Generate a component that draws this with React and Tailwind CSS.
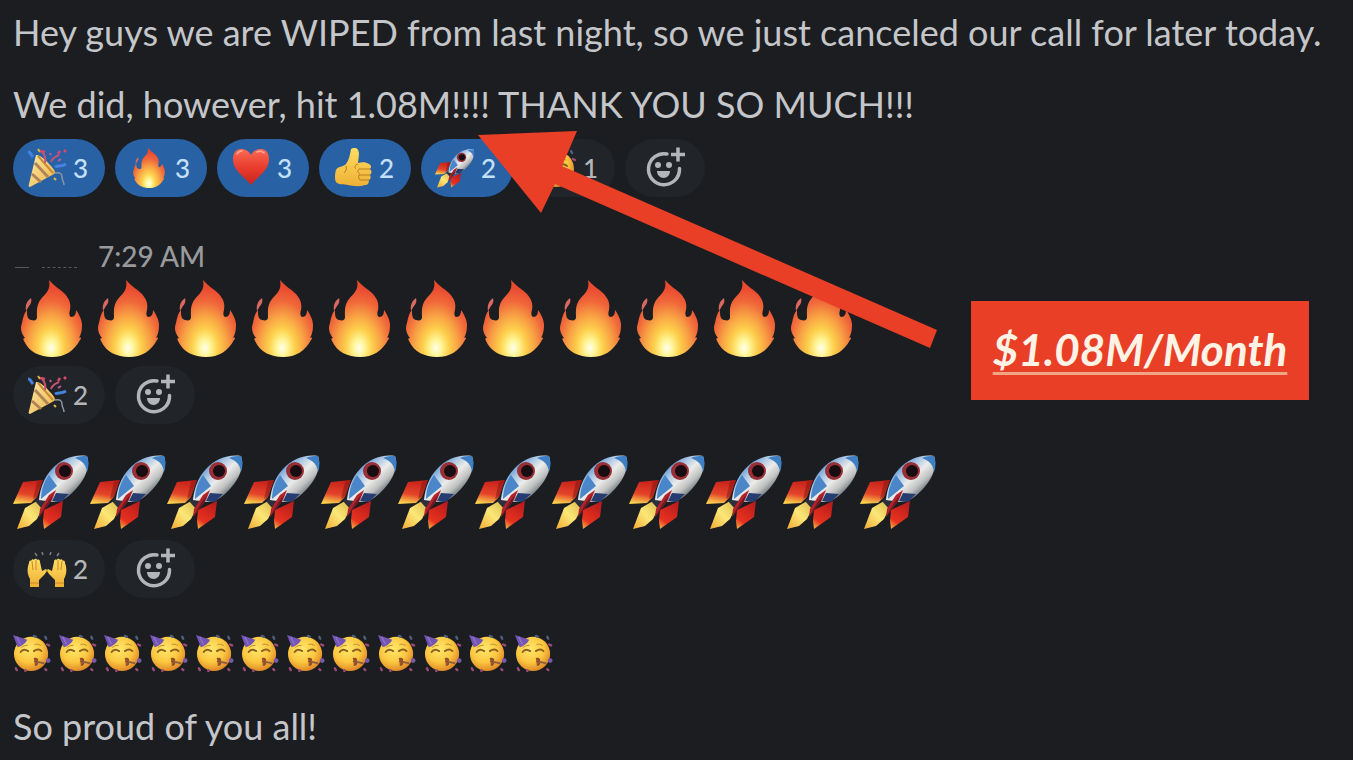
import React from "react";

const Gradients = () => (
  <svg className="absolute h-0 w-0" aria-hidden="true">
    <defs>
      <radialGradient id="flame" gradientUnits="userSpaceOnUse" cx="38" cy="68" r="60" gradientTransform="translate(38 0) scale(0.68 1) translate(-38 0)">
        <stop offset="0" stopColor="#fffef0" />
        <stop offset="0.14" stopColor="#fff596" />
        <stop offset="0.32" stopColor="#fdd04c" />
        <stop offset="0.55" stopColor="#f8a044" />
        <stop offset="0.78" stopColor="#f0683a" />
        <stop offset="1" stopColor="#ea4a30" />
      </radialGradient>
      <linearGradient id="hull" gradientUnits="userSpaceOnUse" x1="36" y1="14" x2="62" y2="42">
        <stop offset="0" stopColor="#5b93d2" />
        <stop offset="0.25" stopColor="#a9c6e4" />
        <stop offset="0.5" stopColor="#ececea" />
        <stop offset="0.75" stopColor="#bfc1c0" />
        <stop offset="1" stopColor="#59646f" />
      </linearGradient>
      <linearGradient id="finLeft" x1="0.6" y1="0" x2="0.4" y2="1">
        <stop offset="0" stopColor="#c7201a" />
        <stop offset="0.6" stopColor="#e4442a" />
        <stop offset="1" stopColor="#fbd24c" />
      </linearGradient>
      <linearGradient id="finRight" x1="0.7" y1="0" x2="0.2" y2="1">
        <stop offset="0" stopColor="#b91c1c" />
        <stop offset="0.75" stopColor="#e8321f" />
        <stop offset="1" stopColor="#f5a03c" />
      </linearGradient>
      <linearGradient id="exhaust" x1="1" y1="0" x2="0" y2="1">
        <stop offset="0" stopColor="#d9b84a" />
        <stop offset="0.5" stopColor="#fbe777" />
        <stop offset="1" stopColor="#f3a934" />
      </linearGradient>
      <radialGradient id="face" cx="0.42" cy="0.35" r="0.65">
        <stop offset="0" stopColor="#ffe76c" />
        <stop offset="0.6" stopColor="#fbc840" />
        <stop offset="1" stopColor="#e08a28" />
      </radialGradient>
      <linearGradient id="skin" x1="0" y1="0" x2="0" y2="1">
        <stop offset="0" stopColor="#ffdd63" />
        <stop offset="1" stopColor="#eeb035" />
      </linearGradient>
      <linearGradient id="heart" x1="0" y1="0" x2="0" y2="1">
        <stop offset="0" stopColor="#fa6a54" />
        <stop offset="0.5" stopColor="#ea3d2f" />
        <stop offset="1" stopColor="#c92319" />
      </linearGradient>
      <linearGradient id="cone" x1="0" y1="0" x2="1" y2="1">
        <stop offset="0" stopColor="#fbe9a8" />
        <stop offset="1" stopColor="#f0b445" />
      </linearGradient>
    </defs>
  </svg>
);

const Fire = ({ className }) => (
  <svg viewBox="0 0 77 77" className={className} aria-hidden="true">
    <path fill="url(#flame)" d="M36 0c5 6 11 9 16 14 5 6 6 10 5 16-1 3-1 6 1 7 4 0 5-3 5-7 3 4 6 10 6 15 0 6-1 9-3 13 2-1 3 0 1 2-6 11-15 17-28 17-12 0-23-5-28-16-1-2-1-3 1-3-4-5-5-10-3-15 1-5 2-10 5-13 0 5 0 9 4 10 4 1 6 0 6-3 0-5-1-12 4-18 5-6 10-9 8-19z" />
    <path fill="#d96a62" d="M18 18c1 3 0 6-2 8l-3 5c-1-6 1-10 5-13z" />
  </svg>
);

const Rocket = ({ className }) => (
  <svg viewBox="0 0 77 77" className={className} aria-hidden="true">
    <path fill="url(#finLeft)" d="M10 29l20-2-6 17-6 6-18 1z" />
    <path fill="#7e1512" d="M24 29l6-2-6 17-4 2z" opacity="0.5" />
    <path fill="url(#finRight)" d="M31 57l19-9-2 16-17 12-1-8z" />
    <path fill="url(#exhaust)" d="M12 55l12-7 6 6-6 12-8 7-12 3z" />
    <path fill="#2d2f3c" d="M22 48l5-5 7 5-5 8z" />
    <path fill="url(#hull)" d="M74 3c3 8 0 19-7 28-5 7-12 13-19 17l-8 1-14-2c1-11 5-23 13-31C48 6 61 1 74 3z" />
    <path fill="#3f7fc4" d="M74 3c2 5 2 10 0 16-1-7-4-11-12-14 4-2 8-2 12-2z" />
    <path fill="#4a86c8" d="M36 22l8 11-16 13c0-9 3-17 8-24z" />
    <path fill="#273d71" d="M43 40l13 1-8 8-9-1z" />
    <path fill="#b3222b" d="M43 37l-4 10-13 17 1-8 9-14z" />
    <path fill="#671b22" d="M40 42l-3 8-11 14 8-14z" />
    <circle cx="51" cy="18" r="9" fill="#982f35" />
    <circle cx="52" cy="18" r="6" fill="#170d12" />
  </svg>
);

const Popper = ({ className }) => (
  <svg viewBox="0 0 40 40" className={className} aria-hidden="true">
    <path fill="url(#cone)" d="M9 7c4 0 10 5 14 10 5 5 6 8 4 9L3 39c-1 0-2-1-1-3z" />
    <path d="M8 15l13 14M5 26l9 8" fill="none" stroke="#b08458" strokeWidth="3" />
    <path d="M11 8l15 17" fill="none" stroke="#c98c35" strokeWidth="2" />
    <path d="M18 15c1-5 0-8-3-11M24 14c1-4 4-5 8-7" fill="none" stroke="#c65276" strokeWidth="2" />
    <path d="M28 19c3-2 6 0 11-3M1 4c3 0 3 3 5 5" fill="none" stroke="#4583e0" strokeWidth="3" />
    <path d="M28 25c4-1 7 0 7 4s2 4 2 8" fill="none" stroke="#8d97a3" strokeWidth="1.5" />
    <path d="M11 1l2 3M27 30l2 2" stroke="#ddb549" strokeWidth="2" />
    <path d="M13 3l5 1M31 6l2-3M37 2l2 2" stroke="#d7486a" strokeWidth="2.5" />
    <path d="M23 5l1 2M31 13l3-2" stroke="#bd5b9a" strokeWidth="2" />
  </svg>
);

const Heart = ({ className }) => (
  <svg viewBox="0 0 40 40" className={className} aria-hidden="true">
    <path fill="url(#heart)" d="M20 7c2-4 6-6 10-6 5 0 8 4 8 10 0 12-12 18-18 26C14 29 2 23 2 11 2 5 5 1 10 1c4 0 8 2 10 6z" />
    <path d="M6 6c1-2 3-3 5-3M26 4c2-1 5-1 7 1" fill="none" stroke="#ffa796" strokeWidth="1.5" strokeLinecap="round" />
  </svg>
);

const ThumbsUp = ({ className }) => (
  <svg viewBox="0 0 40 40" className={className} aria-hidden="true">
    <path fill="url(#skin)" d="M20 0c4-1 6 2 6 6l-1 9c4-1 8-1 11 1 2 1 3 3 1 5 2 2 2 4 0 6 1 2 1 4-1 5 0 3-1 5-4 5-6 2-12 1-17 0-4-1-8 0-11-2-3-2-2-10-1-13 2-4 7-3 10-6 3-4 4-9 5-15z" />
    <path d="M25 16c-3 1-4 3-2 5M37 21H26c-2 2-1 4 1 5M37 27H26c-1 2 0 4 1 5M36 32h-9M13 18c1 3 0 5-2 7" fill="none" stroke="#ba7b22" strokeWidth="1" />
  </svg>
);

const RaisedHands = ({ className }) => (
  <svg viewBox="0 0 40 40" className={className} aria-hidden="true">
    <path fill="url(#skin)" d="M4 12c1-2 2-2 3-1 1-2 3-1 3 0 2-1 3 0 3 2l2 9 4-2c2 1 0 4-2 6l-5 5v7H3v-8c-3-5-3-11-1-16 0-2 1-3 2-2z" />
    <path fill="url(#skin)" d="M36 12c-1-2-2-2-3-1-1-2-3-1-3 0-2-1-3 0-3 2l-2 9-4-2c-2 1 0 4 2 6l5 5v7h9v-8c3-5 3-11 1-16 0-2-1-3-2-2z" />
    <path d="M5 12l1 9M9 11v10M35 12l-1 9M31 11v10M3 34h9M28 34h9" stroke="#c98a27" strokeWidth="1" />
    <path d="M8 4l2 3M15 3l1 3M24 3l-1 3M32 4l-2 3" stroke="#7d8082" strokeWidth="1.5" />
  </svg>
);

const PartyFace = ({ className }) => (
  <svg viewBox="0 0 40 40" className={className} aria-hidden="true">
    <circle cx="19" cy="21" r="18" fill="url(#face)" />
    <path fill="#7455b5" d="M0 1l15 5c-2 4-6 7-10 8z" />
    <path d="M4 3l4 8" stroke="#8d70c8" strokeWidth="1.5" />
    <path d="M8 19c2-3 5-3 8-1M22 18c3-2 6-2 8 0" fill="none" stroke="#8a6120" strokeWidth="2" strokeLinecap="round" />
    <path d="M9 14c2-2 4-2 6-2M23 11c2-1 4 0 6 1" fill="none" stroke="#b98a30" strokeWidth="1" strokeLinecap="round" />
    <path d="M22 26c4-1 5 2 2 3 3 1 2 4-1 4" fill="#a65a2a" stroke="#8c4c2c" strokeWidth="1.5" />
    <path d="M25 29l8 2" stroke="#8c5d42" strokeWidth="2" />
    <circle cx="37" cy="28" r="2.5" fill="#7659a7" />
    <path d="M36 11l2 1M3 36l1 2M34 37l1 1M13 38v1" stroke="#9c4a78" strokeWidth="2.5" strokeLinecap="round" />
    <path d="M22 2l2 1M34 3l1 2" stroke="#4f5f7c" strokeWidth="2.5" strokeLinecap="round" />
  </svg>
);

const AddReaction = () => (
  <button aria-label="Add reaction" className="flex h-[58px] w-20 items-center justify-center rounded-full bg-[#212428] text-[#b4b5b8]">
    <svg viewBox="0 0 44 44" className="h-11 w-11" fill="none" stroke="currentColor" strokeWidth="3.5" aria-hidden="true">
      <path d="M24 8a15.500 15.500 0 1 0 12.500 14.500" strokeLinecap="round" />
      <path d="M35 1.500v14M28 8.500h14" />
      <circle cx="15" cy="19" r="3" fill="currentColor" stroke="none" />
      <circle cx="26" cy="19" r="3" fill="currentColor" stroke="none" />
      <path d="M14 25h13c0 4-3 7-6.500 7s-6.500-3-6.500-7z" fill="currentColor" stroke="none" />
    </svg>
  </button>
);

const Reaction = ({ icon: Icon, label, count, active }) => (
  <button
    aria-label={`${label} ${count}`}
    className={`flex h-[58px] w-[92px] items-center gap-[6px] rounded-full pl-[14px] text-[26px] font-medium ${
      active ? "bg-[#2961a5] text-[#c3e0f8]" : "bg-[#212428] text-[#b4b5b8]"
    }`}
  >
    <Icon className="h-10 w-10 shrink-0" />
    <span>{count}</span>
  </button>
);

const Reactions = ({ items }) => (
  <div className="flex flex-wrap gap-[10px]">
    {items.map((item) => (
      <Reaction key={item.label} {...item} />
    ))}
    <AddReaction />
  </div>
);

const firstReactions = [
  { icon: Popper, label: "Tada", count: 3, active: true },
  { icon: Fire, label: "Fire", count: 3, active: true },
  { icon: Heart, label: "Heart", count: 3, active: true },
  { icon: ThumbsUp, label: "Thumbs up", count: 2, active: true },
  { icon: Rocket, label: "Rocket", count: 2, active: true },
  { icon: PartyFace, label: "Partying face", count: 1, active: false },
];

const repeat = (n) => Array.from({ length: n }, (_, i) => i);

const App = () => {
  return (
    <div className="relative min-h-screen overflow-hidden bg-[#1b1d21] px-[13px] pt-[10px] pb-2 font-['Lato',sans-serif] text-[#c5c6c9]">
      <Gradients />
      <main>
        <section>
          <div className="flex flex-col gap-7 text-[36px] leading-[44px]">
            <p>Hey guys we are WIPED from last night, so we just canceled our call for later today.</p>
            <p>We did, however, hit 1.08M!!!! THANK YOU SO MUCH!!!</p>
          </div>
          <div className="mt-[13px]">
            <Reactions items={firstReactions} />
          </div>
        </section>

        <section className="mt-[43px]">
          <div className="flex items-end gap-[21px] pl-[2px]">
            <div className="flex w-[62px] justify-between pb-1">
              <span className="h-px w-[14px] bg-[#55575b]" />
              <span className="w-[35px] border-b border-dashed border-[#55575b]" />
            </div>
            <time className="text-[28px] leading-8 font-medium text-[#999a9d]">7:29 AM</time>
          </div>
          <div className="mt-2 flex">
            {repeat(11).map((i) => (
              <Fire key={i} className="h-[77px] w-[77px]" />
            ))}
          </div>
          <div className="mt-[9px]">
            <Reactions items={[{ icon: Popper, label: "Tada", count: 2 }]} />
          </div>
        </section>

        <section className="mt-[29px]">
          <div className="flex">
            {repeat(12).map((i) => (
              <Rocket key={i} className="h-[77px] w-[77px]" />
            ))}
          </div>
          <div className="mt-[10px]">
            <Reactions items={[{ icon: RaisedHands, label: "Raised hands", count: 2 }]} />
          </div>
        </section>

        <section className="mt-9">
          <div className="flex w-[540px] justify-between">
            {repeat(12).map((i) => (
              <PartyFace key={i} className="h-[38px] w-[38px]" />
            ))}
          </div>
          <p className="mt-8 text-[36px] leading-[44px]">So proud of you all!</p>
        </section>
      </main>

      <svg viewBox="0 0 460 218" className="absolute top-[131px] left-[478px] h-[218px] w-[460px]" aria-hidden="true">
        <path fill="#e93f27" d="M0 4L99 0 84 35l375 164-7 18L77 53 63 82z" />
      </svg>
      <div className="absolute top-[301px] right-11 flex h-[99px] w-[338px] items-center justify-center bg-[#e93f27] pb-1">
        <strong className="text-[44px] leading-[52px] font-bold text-[#fff3e6] italic underline decoration-[#f0a585] decoration-[3px] underline-offset-[6px] [text-decoration-skip-ink:none]">
          $1.08M/Month
        </strong>
      </div>
    </div>
  );
};

export default App;
